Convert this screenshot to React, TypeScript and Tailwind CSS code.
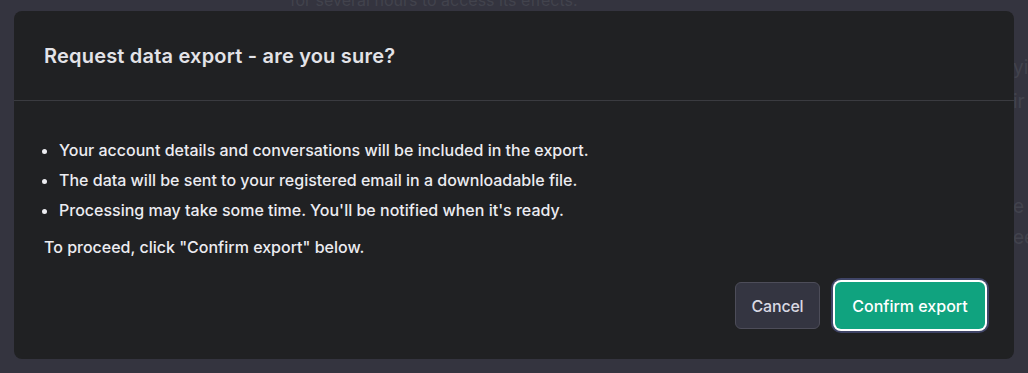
import React from 'react';

const bullets = [
  'Your account details and conversations will be included in the export.',
  'The data will be sent to your registered email in a downloadable file.',
  "Processing may take some time. You'll be notified when it's ready.",
];

// faint bits of the settings page behind the backdrop
const BehindPage: React.FC = () => (
  <div className="pointer-events-none absolute inset-0 text-[16px] text-[#42434d]">
    <div className="absolute left-[290px] top-[-12px]">for several hours to access its effects.</div>
    <div className="absolute left-[1013px] top-[54px] text-[19px]">yi</div>
    <div className="absolute left-[1013px] top-[88px] text-[19px]">ir</div>
    <div className="absolute left-[1013px] top-[193px] text-[19px]">e</div>
    <div className="absolute left-[1013px] top-[224px] text-[19px]">ee</div>
  </div>
);

export default function App() {
  return (
    <div
      className="relative h-[373px] w-full overflow-hidden bg-[#34343f] pl-[14px] pt-[11px]"
      style={{ fontFamily: 'Inter, "Noto Sans", sans-serif' }}
    >
      <BehindPage />
      <div className="relative flex h-[348px] w-[1000px] flex-col rounded-lg bg-[#202123]">
        <div className="flex h-[90px] items-center border-b border-[#3a3b40] px-[30px]">
          <h2 className="text-[20px] font-semibold tracking-[0.2px] text-[#e3e3e8]">
            Request data export - are you sure?
          </h2>
        </div>
        <div className="px-[30px] pt-[37px] text-[16px] font-medium text-[#ececf1]">
          <ul className="flex list-disc flex-col gap-[6px] pl-[15px] leading-6">
            {bullets.map((b) => (
              <li key={b}>{b}</li>
            ))}
          </ul>
          <p className="mt-[13px] leading-6">To proceed, click "Confirm export" below.</p>
        </div>
        <div className="mt-auto flex justify-end gap-[15px] pb-[30px] pr-[29px]">
          <button className="h-[47px] w-[85px] rounded-md border border-[#4d4d59] bg-[#343541] text-[16px] font-medium tracking-[-0.2px] text-[#d9d9e3]">
            Cancel
          </button>
          <button className="h-[47px] w-[150px] rounded-md bg-[#10a37f] text-[16px] font-medium text-white shadow-[0_0_0_2px_#ffffff,0_0_0_4px_#3f4466]">
            Confirm export
          </button>
        </div>
      </div>
    </div>
  );
}
